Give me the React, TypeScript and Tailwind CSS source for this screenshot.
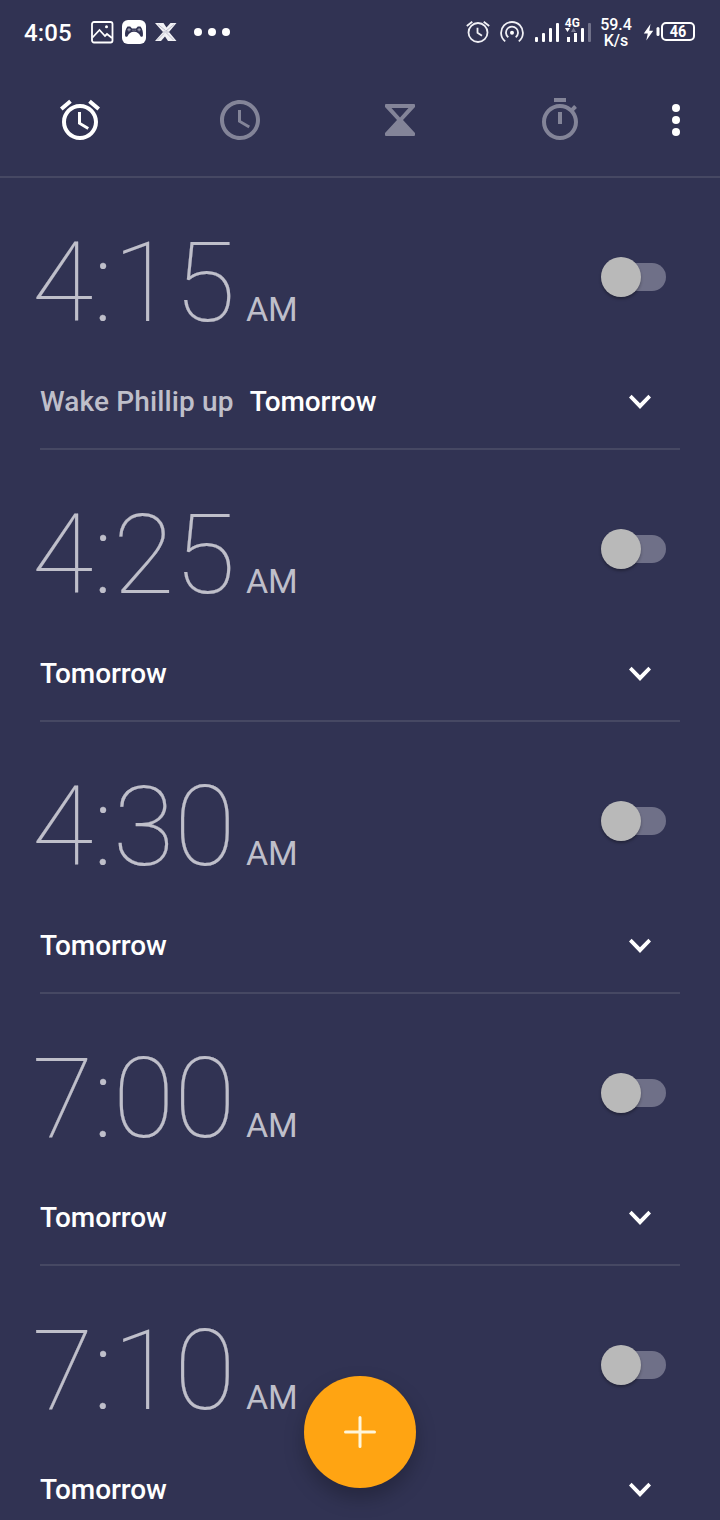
import React from "react";

type Alarm = { time: string; label?: string };

const alarms: Alarm[] = [
  { time: "4:15", label: "Wake Phillip up" },
  { time: "4:25" },
  { time: "4:30" },
  { time: "7:00" },
  { time: "7:10" },
];

function StatusBar() {
  return (
    <header className="flex h-16 shrink-0 items-center pl-6 text-white">
      <span className="mt-px w-[66px] text-[24px] leading-8 font-medium tracking-[0.1px]">4:05</span>
      <svg width="24" height="24" viewBox="0 0 24 24" fill="none" stroke="white" strokeWidth="1.8" className="shrink-0">
        <rect x="2" y="2" width="20.5" height="20.5" rx="2" />
        <path d="M2.5 17.5l7-7.5 5.5 6 2-2 5 4" />
        <circle cx="16.5" cy="6.7" r="1.5" fill="white" stroke="none" />
      </svg>
      <svg width="24" height="24" viewBox="0 0 24 24" className="ml-2 shrink-0">
        <rect width="24" height="24" rx="6" fill="white" />
        <path d="M5.500 6.500h2.700l1.800 2h4l1.800-2h2.700C20.500 9 21.300 12.500 20.900 15.500c-.2 1.700-1.800 1.700-2.600.5-1-2.600-3.200-4.200-6.300-4.200S6.700 13.400 5.700 16c-.8 1.200-2.400 1.200-2.600-.5C2.700 12.500 3.500 9 5.500 6.500z" fill="#313353" />
        <path d="M7 8v3.500M5.300 9.800h3.500M15.400 9.800h3.400M17.100 8v3.500M10.500 10.200h1M12.600 10.200h1" stroke="#b9b9c6" strokeWidth="0.8" />
      </svg>
      <svg width="22" height="20" viewBox="0 0 22 20" className="ml-[9px] shrink-0">
        <path d="M0 1h8.500l3 4.500L15.500 1h6L14 10l7.500 9H13l-3-4.500L6 19H0l8-9z" fill="#f1f1f5" />
        <path d="M3 2.500l7.500 6M19 2.500l-8 6.500M2.500 18L9 11.500M11.500 11l7 7M8 10h6" stroke="#9a9bae" strokeWidth="0.6" fill="none" />
      </svg>
      <div className="ml-[17px] flex gap-[6px]">
        <i className="size-2 rounded-full bg-white" />
        <i className="size-2 rounded-full bg-white" />
        <i className="size-2 rounded-full bg-white" />
      </div>
      <svg width="24" height="24" viewBox="0 0 24 24" fill="none" stroke="#f0f0f5" strokeWidth="1.8" className="ml-[236px] shrink-0">
        <circle cx="12" cy="12.500" r="9.500" />
        <path d="M.8 6L6.300 1.700M23.200 6l-5.500-4.300M11.500 7.800v4.900l4.500 3" />
      </svg>
      <svg width="24" height="24" viewBox="0 0 24 24" fill="none" stroke="#f0f0f5" strokeWidth="1.8" className="ml-[10px] shrink-0">
        <path d="M5.200 21.400a10.900 10.900 0 1 1 13.600 0" />
        <path d="M8.300 17.300a6 6 0 1 1 7.400 0" />
        <circle cx="12" cy="12.700" r="2" fill="white" stroke="none" />
      </svg>
      <svg width="58" height="32" viewBox="0 0 58 32" fill="white" className="ml-[10px] shrink-0">
        <rect x="1" y="21" width="3" height="5" rx="1" />
        <rect x="8" y="17" width="3" height="9" rx="1" />
        <rect x="15" y="12" width="3" height="14" rx="1" />
        <rect x="22" y="7" width="3" height="19" rx="1" />
        <path d="M31 12h5l-2.500 4z" />
        <path d="M37 16h5l-2.500-4.500z" fill="#777890" />
        <rect x="33" y="21" width="3" height="5" />
        <rect x="40" y="17" width="3" height="9" />
        <rect x="47" y="12" width="3" height="14" rx="1" />
        <rect x="54" y="7" width="3" height="19" rx="1" fill="#707189" />
        <text x="30.800" y="11" fontSize="12.500" fontWeight="700" textLength="15" lengthAdjust="spacingAndGlyphs">4G</text>
      </svg>
      <div className="mt-0.5 ml-[4px] w-[40px] text-center text-[16px] leading-4 font-medium">
        <div>59.4</div>
        <div>K/s</div>
      </div>
      <svg width="56" height="24" viewBox="0 0 56 24" className="ml-[7px] shrink-0">
        <path d="M7.500 4L.8 13.500h4L3.300 20.500l6.900-9.800H6.300z" fill="white" />
        <rect x="13.500" y="7" width="3" height="9" rx="1.500" fill="white" />
        <rect x="19" y="3" width="32" height="17" rx="4" fill="none" stroke="white" strokeWidth="2" />
        <text x="35" y="17" textAnchor="middle" fontSize="16" fontWeight="700" fill="white" textLength="16.500" lengthAdjust="spacingAndGlyphs">46</text>
      </svg>
    </header>
  );
}

function Tabs() {
  return (
    <nav className="flex h-[114px] shrink-0 items-start border-b-2 border-[#464863] pt-8 text-[#838498]">
      <button className="flex w-40 justify-center text-white">
        <svg width="48" height="48" viewBox="0 0 24 24" fill="currentColor">
          <path d="M22 5.720l-4.600-3.860-1.290 1.530 4.600 3.860L22 5.720zM7.880 3.390L6.600 1.860 2 5.710l1.290 1.530 4.590-3.850zM12.500 8H11v6l4.750 2.850.75-1.230-4-2.370V8zM12 4c-4.970 0-9 4.030-9 9s4.020 9 9 9c4.970 0 9-4.030 9-9s-4.030-9-9-9zm0 16c-3.870 0-7-3.130-7-7s3.130-7 7-7 7 3.130 7 7-3.130 7-7 7z" />
        </svg>
      </button>
      <button className="flex w-40 justify-center">
        <svg width="48" height="48" viewBox="0 0 24 24" fill="currentColor">
          <path d="M11.990 2C6.470 2 2 6.480 2 12s4.470 10 9.990 10C17.520 22 22 17.520 22 12S17.520 2 11.990 2zM12 20c-4.420 0-8-3.580-8-8s3.580-8 8-8 8 3.580 8 8-3.580 8-8 8zM12.500 7H11v6l5.250 3.150.75-1.230-4.500-2.670z" />
        </svg>
      </button>
      <button className="flex w-40 justify-center">
        <svg width="48" height="48" viewBox="0 0 48 48" fill="currentColor" fillRule="evenodd">
          <path d="M10 8h28q1 0 1 1v2L27 24l12 13v2q0 1-1 1H10q-1 0-1-1v-2l12-13L9 11V9q0-1 1-1zM15.500 12L24 21.500 32.500 12z" />
        </svg>
      </button>
      <button className="flex w-40 justify-center">
        <svg width="48" height="48" viewBox="0 0 24 24" fill="currentColor">
          <path d="M15 1H9v2h6V1zm-4 13h2V8h-2v6zm8.030-6.610l1.420-1.420c-.43-.51-.9-.99-1.410-1.410l-1.420 1.420C16.070 4.740 14.120 4 12 4c-4.970 0-9 4.030-9 9s4.020 9 9 9 9-4.030 9-9c0-2.120-.74-4.070-1.970-5.610zM12 20c-3.870 0-7-3.130-7-7s3.130-7 7-7 7 3.130 7 7-3.130 7-7 7z" />
        </svg>
      </button>
      <button className="flex h-12 w-[72px] flex-col items-center justify-center gap-1">
        <i className="size-2 rounded-full bg-white" />
        <i className="size-2 rounded-full bg-white" />
        <i className="size-2 rounded-full bg-white" />
      </button>
    </nav>
  );
}

function AlarmRow({ time, label }: Alarm) {
  return (
    <section className="mx-10 h-[272px] shrink-0 border-b-2 border-[#464863] pt-[49px]">
      <div className="flex h-28 justify-between pr-[14px]">
        <div className="-ml-2 flex items-baseline text-[#bfbfca]">
          <span className="w-[214px] text-[112px] leading-[112px] font-thin tracking-[-0.1px] whitespace-nowrap [-webkit-text-stroke:0.2px_#bfbfca]">
            {time}
          </span>
          <span className="text-[34px] leading-[40px] tracking-[-0.3px]">AM</span>
        </div>
        <button className="mt-[30px] flex h-10 w-[65px] items-center">
          <span className="z-10 size-10 shrink-0 rounded-full bg-[#b9b9b9] shadow-[0_2px_3px_rgba(0,0,0,0.3)]" />
          <span className="-ml-5 h-7 w-[45px] shrink-0 rounded-r-full bg-[#6f7088]" />
        </button>
      </div>
      <div className="mt-[42px] flex h-10 items-center justify-between pr-4">
        <div className="mt-0.5 flex gap-4 text-[28px] leading-10 font-medium text-white">
          {label && <span className="tracking-[0.14px] text-[#bfbfca]">{label}</span>}
          <span className="tracking-[-0.1px]">Tomorrow</span>
        </div>
        <svg width="48" height="48" viewBox="0 0 24 24" fill="white">
          <path d="M7.800 8.900L12 13.100l4.200-4.200 1.300 1.300-5.500 5.800-5.500-5.800z" />
        </svg>
      </div>
    </section>
  );
}

export default function App() {
  return (
    <main className="relative flex h-[1520px] w-[720px] flex-col overflow-hidden bg-[#313353] font-['Roboto',sans-serif]">
      <StatusBar />
      <Tabs />
      {alarms.map((alarm) => (
        <AlarmRow key={alarm.time} {...alarm} />
      ))}
      <button className="absolute bottom-8 left-[304px] z-20 flex size-28 items-center justify-center rounded-full bg-[#ffa412] shadow-[0_10px_20px_rgba(0,0,0,0.25)]">
        <svg width="32" height="32" viewBox="0 0 32 32" stroke="#fff6db" strokeWidth="3" strokeLinecap="round">
          <path d="M16 1.500v29M1.500 16h29" />
        </svg>
      </button>
    </main>
  );
}
